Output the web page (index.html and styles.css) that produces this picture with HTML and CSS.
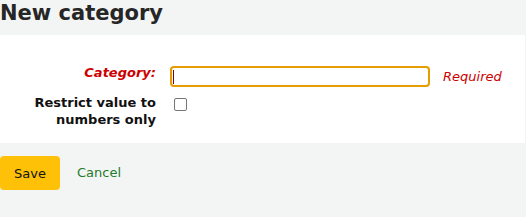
FILE: index.html
```html
<!DOCTYPE html>
<html>
<head>
<meta charset="utf-8">
<link rel="stylesheet" href="styles.css">
</head>
<body>
<h1 class="title">New category</h1>
<form class="panel">
  <div class="row">
    <label class="lbl required">Category:</label>
    <div class="field">
      <span class="input-wrap"><input class="text" type="text"></span>
      <span class="req">Required</span>
    </div>
  </div>
  <div class="row">
    <label class="lbl">Restrict value to numbers only</label>
    <div class="field"><span class="check"></span></div>
  </div>
</form>
<div class="actions">
  <button class="save" type="button">Save</button>
  <a class="cancel" href="#">Cancel</a>
</div>
</body>
</html>
```
FILE: styles.css
```css
html, body { margin: 0; padding: 0; }
body {
  background: #f3f4f4;
  font-family: "DejaVu Sans", sans-serif;
  font-size: 13px;
  color: #111;
  width: 526px;
  height: 217px;
  overflow: hidden;
}
.title {
  margin: 0;
  font-size: 21px;
  line-height: 26px;
  font-weight: bold;
  color: #262626;
  height: 35px;
}
.panel {
  background: #fff;
  width: 525px;
  padding: 31px 0 0 0;
  box-sizing: border-box;
  height: 108px;
  display: flex;
  flex-direction: column;
  gap: 7px;
}
.row {
  display: flex;
  align-items: flex-start;
}
.lbl {
  width: 156px;
  text-align: right;
  font-weight: bold;
  line-height: 17px;
  color: #111;
}
.lbl.required { color: #cc0000; font-style: italic; margin-top: -2px; }
.field {
  margin-left: 14px;
  display: flex;
  align-items: center;
}
.input-wrap { position: relative; display: block; }
.input-wrap::after {
  content: "";
  position: absolute;
  left: 3px;
  top: 4px;
  width: 1px;
  height: 14px;
  background: #8b0000;
}
.text {
  display: block;
  width: 260px;
  height: 21px;
  box-sizing: border-box;
  border: 2px solid #e59d00;
  border-radius: 4px;
  outline: none;
  padding: 0 2px;
  margin: 0;
  font-family: "DejaVu Sans", sans-serif;
}
.req {
  margin-left: 13px;
  color: #cc0000;
  font-style: italic;
}
.check {
  display: block;
  width: 11px;
  height: 11px;
  border: 1px solid #767676;
  border-radius: 2px;
  margin: 4px 0 0 4px;
  background: #fff;
}
.actions {
  display: flex;
  align-items: center;
  padding-top: 13px;
  gap: 17px;
}
.save {
  background: #ffc107;
  border: none;
  border-radius: 4px;
  width: 60px;
  height: 34px;
  font-family: "DejaVu Sans", sans-serif;
  font-size: 13px;
  color: #111;
  padding: 0;
  margin: 0;
}
.cancel {
  color: #1e7b2a;
  text-decoration: none;
  margin-top: -2px;
}
```
